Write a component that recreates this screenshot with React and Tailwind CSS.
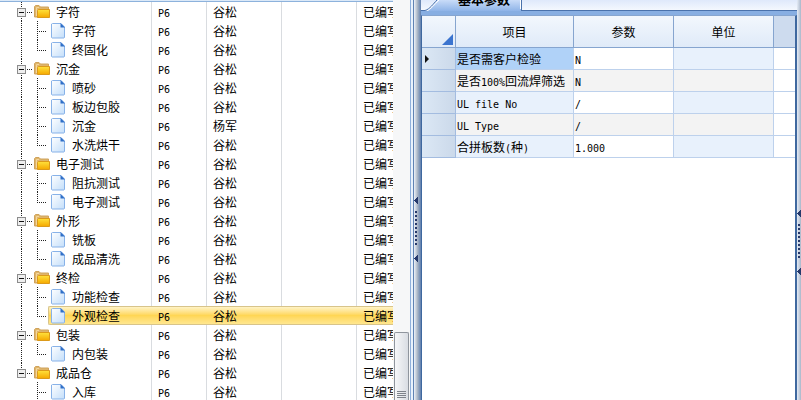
const groups = [
  { name: '字符', items: [{ name: '字符' }, { name: '终固化' }] },
  { name: '沉金', items: [{ name: '喷砂' }, { name: '板边包胶' }, { name: '沉金', owner: '杨军' }, { name: '水洗烘干' }] },
  { name: '电子测试', items: [{ name: '阻抗测试' }, { name: '电子测试' }] },
  { name: '外形', items: [{ name: '铣板' }, { name: '成品清洗' }] },
  { name: '终检', items: [{ name: '功能检查' }, { name: '外观检查', selected: true }] },
  { name: '包装', items: [{ name: '内包装' }] },
  { name: '成品仓', items: [{ name: '入库', more: true }] },
]

const params = [
  { name: '是否需客户检验', value: 'N' },
  { name: '是否100%回流焊筛选', value: 'N' },
  { name: 'UL file No', value: '/' },
  { name: 'UL Type', value: '/' },
  { name: '合拼板数(种)', value: '1.000' },
]

// flatten the tree to table rows
const rows = groups.flatMap((group, g) => {
  const lastGroup = g === groups.length - 1
  return [
    { name: group.name, isGroup: true, lastGroup },
    ...group.items.map((item, i) => ({ ...item, last: i === group.items.length - 1 && !item.more, lastGroup })),
  ]
})

// half-width characters are set in a monospace face, half as wide as the Chinese ones
function MixedText({ text }) {
  return text.split(/([\x20-\x7e]+)/).filter(Boolean).map((part, i) => (
    /^[\x20-\x7e]/.test(part)
      ? <span key={i} className="font-['DejaVu_Sans_Mono',monospace] text-[10px] leading-none">{part}</span>
      : <span key={i}>{part}</span>
  ))
}

function GroupBranch({ lastGroup }) {
  return (
    <svg width="34" height="19" className="shrink-0" shapeRendering="crispEdges">
      <path d={lastGroup ? 'M21.5 0V6' : 'M21.5 0V19'} stroke="#222" strokeDasharray="1 1" />
      <path d="M27 10.5H32" stroke="#222" strokeDasharray="1 1" />
      <rect x="17.5" y="6.5" width="8" height="8" fill="#eeeeee" stroke="#8c8c8c" />
      <path d="M19 10.5H24" stroke="#111" />
    </svg>
  )
}

function ItemBranch({ last, lastGroup }) {
  return (
    <svg width="48" height="19" className="shrink-0" shapeRendering="crispEdges">
      {!lastGroup && <path d="M21.5 0V19" stroke="#222" strokeDasharray="1 1" />}
      <path d={last ? 'M37.5 0V11' : 'M37.5 0V19'} stroke="#222" strokeDasharray="1 1" />
      <path d="M37 10.5H47" stroke="#222" strokeDasharray="1 1" />
    </svg>
  )
}

function FolderIcon() {
  return (
    <svg width="17" height="15" viewBox="0 0 17 15" className="shrink-0">
      <defs>
        <linearGradient id="folder" x1="0" y1="0" x2="0" y2="1">
          <stop offset="0" stopColor="#ffe23c" />
          <stop offset="1" stopColor="#f5a800" />
        </linearGradient>
      </defs>
      <path d="M.5 13V2.5L1.5 1.500H5L6.500 3H14.500V13Z" fill="#dfb46a" stroke="#cfa35c" />
      <path d="M2.500 12V3.500H5" stroke="#f3d79d" fill="none" />
      <path d="M4.500 5.500H15.500V13.500H3.500V6.500Z" fill="url(#folder)" stroke="#dc9a1a" />
    </svg>
  )
}

function PageIcon() {
  return (
    <svg width="15" height="17" viewBox="0 0 15 17" className="shrink-0">
      <defs>
        <linearGradient id="page" x1="0" y1="0" x2="1" y2="1">
          <stop offset="0" stopColor="#ffffff" />
          <stop offset="1" stopColor="#c3defa" />
        </linearGradient>
      </defs>
      <path d="M.5 2L1.500 1.500H10L13.500 5V15.500L13 16H1L.5 15.500Z" fill="url(#page)" stroke="#88b2e8" />
      <path d="M9.500 1L14 5.500H9.500Z" fill="#2f6fc8" />
    </svg>
  )
}

function ProcessTree() {
  return (
    <div className="min-w-0 flex-1 overflow-hidden">
      <div className="h-[2px] border-b border-[#8db2dc] bg-[#dbe9f8]" />
      <table className="w-full table-fixed border-separate border-spacing-0">
        <colgroup>
          <col className="w-[152px]" />
          <col className="w-[55px]" />
          <col className="w-[75px]" />
          <col className="w-[75px]" />
          <col />
        </colgroup>
        <tbody>
          {rows.map((row, i) => {
            const tone = row.selected
              ? 'border-y border-y-[#d8c48a] bg-linear-to-b from-[#fff3c4] from-0% via-[#ffd654] via-50% to-[#ffe78f]'
              : ''
            const cell = `h-[19px] overflow-hidden whitespace-nowrap p-0 pl-[6px] ${row.selected ? tone : 'border-r border-[#d9dce0]'}`
            const indent = row.isGroup ? 'gap-[5px]' : row.selected ? 'gap-[6px] rounded-l-[2px] border-l border-l-[#d8c48a] pl-[2px]' : 'gap-[6px] pl-[3px]'
            return (
              <tr key={i} className="leading-[15px]">
                <td className={`h-[19px] p-0 ${row.selected ? '' : 'border-r border-[#d9dce0]'}`}>
                  <div className="flex h-[19px] items-center">
                    {row.isGroup ? <GroupBranch lastGroup={row.lastGroup} /> : <ItemBranch last={row.last} lastGroup={row.lastGroup} />}
                    <div className={`flex h-[19px] flex-1 items-center whitespace-nowrap ${indent} ${tone}`}>
                      {row.isGroup ? <FolderIcon /> : <PageIcon />}
                      {row.name}
                    </div>
                  </div>
                </td>
                <td className={cell}><MixedText text="P6" /></td>
                <td className={cell}>{row.owner || '谷松'}</td>
                <td className={cell} />
                <td className={`h-[19px] overflow-hidden whitespace-nowrap p-0 pl-[6px] ${tone}`}>已编写</td>
              </tr>
            )
          })}
        </tbody>
      </table>
    </div>
  )
}

function ScrollBar() {
  return (
    <div className="flex w-[17px] shrink-0 flex-col bg-[#f6f7f8] pr-px pl-px">
      <div className="h-[83%]" />
      <div className="flex flex-1 flex-col items-center justify-end gap-px rounded-t-[2px] border border-b-0 border-[#8f959d] bg-linear-to-r from-[#f6f7f9] to-[#d9dde3] pb-[2px]">
        <span className="h-px w-[9px] bg-[#7d838b]" />
        <span className="h-px w-[9px] bg-[#7d838b]" />
        <span className="h-px w-[9px] bg-[#7d838b]" />
        <span className="h-px w-[9px] bg-[#7d838b]" />
      </div>
    </div>
  )
}

function SplitterMarks() {
  return (
    <svg width="4" height="65" viewBox="0 0 4 65" className="shrink-0" shapeRendering="crispEdges">
      <path d="M4 0V7L0 3.500Z" fill="#26396b" />
      <path d="M2 14V49" stroke="#26396b" strokeWidth="2" strokeDasharray="2 2" />
      <path d="M4 58V65L0 61.500Z" fill="#26396b" />
    </svg>
  )
}

function ParamTable() {
  return (
    <table className="w-full table-fixed border-separate border-spacing-0">
      <colgroup>
        <col className="w-[34px]" />
        <col className="w-[118px]" />
        <col className="w-[100px]" />
        <col className="w-[100px]" />
        <col />
      </colgroup>
      <thead>
        <tr className="bg-linear-to-b from-[#f2f7fd] to-[#dfeaf8]">
          <th className="h-[32px] border-r border-b border-[#86a5cf] p-0 pr-[2px] pb-[2px] align-bottom">
            <svg width="11" height="11" className="ml-auto block">
              <path d="M11 0V11H0Z" fill="#3b74cf" />
            </svg>
          </th>
          <th className="border-r border-b border-[#86a5cf] p-0 font-normal">项目</th>
          <th className="border-r border-b border-[#86a5cf] p-0 font-normal">参数</th>
          <th className="border-r border-b border-[#86a5cf] p-0 font-normal">单位</th>
          <th className="border-b border-[#86a5cf] bg-[#cddbee] p-0" />
        </tr>
      </thead>
      <tbody>
        {params.map((param, i) => {
          const odd = i % 2 === 1
          const locked = odd ? 'bg-[#f3f3f3]' : 'bg-[#e8f1fc]'
          return (
            <tr key={i} className="leading-[18px]">
              <td className="h-[22px] border-r border-b border-[#a3bce0] bg-linear-to-r from-[#dce8f5] to-[#cbd9ea] p-0">
                {i === 0 && (
                  <svg width="5" height="8" className="ml-[3px] block">
                    <path d="M0 0V8L4 4Z" fill="#111" />
                  </svg>
                )}
              </td>
              <td className={`overflow-hidden border-r border-b border-[#bdd1ec] p-0 pl-px whitespace-nowrap ${i === 0 ? 'bg-[#b0d2f8]' : locked}`}>
                <MixedText text={param.name} />
              </td>
              <td className={`border-r border-b border-[#bdd1ec] p-0 pl-px ${odd ? 'bg-[#f3f3f3]' : ''}`}><MixedText text={param.value} /></td>
              <td className={`border-r border-b border-[#bdd1ec] p-0 ${locked}`} />
              <td className="border-b border-[#bdd1ec] p-0" />
            </tr>
          )
        })}
      </tbody>
    </table>
  )
}

function TabBar() {
  return (
    <header className="flex h-[11px] items-start bg-linear-to-b from-[#dfe9fb] to-[#f6f9fe]">
      <div className="h-[11px] w-[4px] border-b border-[#4a72ac]" />
      <button type="button" className="relative flex h-[11px] w-[97px] items-end justify-end pr-[12px] pb-[4px] text-[13px] leading-[16px] font-bold">
        <svg width="97" height="11" className="absolute top-0 left-0">
          <defs>
            <linearGradient id="tab" x1="0" y1="0" x2="0" y2="1">
              <stop offset="0" stopColor="#c9dcf8" />
              <stop offset="1" stopColor="#8fb4e8" />
            </linearGradient>
          </defs>
          <path d="M0 11C5 10 8 5 13 0H96V11Z" fill="url(#tab)" />
          <path d="M0 10.500C5 9 8 4 12 0" fill="none" stroke="#4a72ac" />
          <path d="M2 11C6 9 9 5 14 0" fill="none" stroke="#fff" />
          <path d="M95.500 0V9" stroke="#fff" />
          <path d="M96.500 0V11" stroke="#4a72ac" />
        </svg>
        <span className="relative">基本参数</span>
      </button>
      <div className="h-[11px] flex-1 border-b border-[#4a72ac]" />
    </header>
  )
}

export default function App() {
  return (
    <div className="grid h-screen grid-cols-[413fr_388fr] overflow-hidden bg-white font-['Noto_Sans_CJK_SC',sans-serif] text-[12px] text-black">
      <section className="flex min-w-0 overflow-hidden">
        <ProcessTree />
        <ScrollBar />
        <div className="w-[3px] shrink-0 border-l border-[#8fb0dc] bg-[#e9f2fc]" />
      </section>

      <section className="flex min-w-0 overflow-hidden">
        <div className="flex w-[8px] shrink-0 flex-col items-start border-l border-[#5f82b3] bg-linear-to-r from-[#eef3f9] via-[#aab6c6] to-[#5f7fae] pt-[197px]">
          <SplitterMarks />
        </div>
        <main className="flex min-w-0 flex-1 flex-col">
          <TabBar />
          <div className="flex flex-1 flex-col border-t-4 border-[#87aee2]">
            <div className="flex-1 border-t border-r-2 border-l border-[#3f689f] border-t-[#86a5cf] bg-white">
              <ParamTable />
            </div>
          </div>
        </main>
        <div className="flex w-[4px] shrink-0 flex-col bg-linear-to-r from-[#e4ebf5] to-[#aab7ca] pt-[210px]">
          <SplitterMarks />
        </div>
      </section>
    </div>
  )
}
